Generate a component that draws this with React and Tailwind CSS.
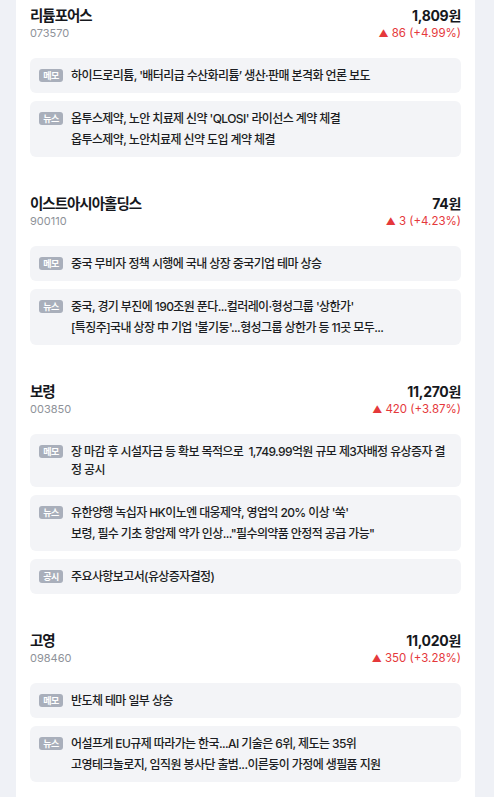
import React from "react";

const stocks = [
  {
    name: "리튬포어스",
    code: "073570",
    price: "1,809원",
    change: "86 (+4.99%)",
    items: [
      { tag: "메모", lines: ["하이드로리튬, '배터리급 수산화리튬’ 생산·판매 본격화 언론 보도"] },
      {
        tag: "뉴스",
        lines: ["옵투스제약, 노안 치료제 신약 'QLOSI' 라이선스 계약 체결", "옵투스제약, 노안치료제 신약 도입 계약 체결"],
      },
    ],
  },
  {
    name: "이스트아시아홀딩스",
    code: "900110",
    price: "74원",
    change: "3 (+4.23%)",
    items: [
      { tag: "메모", lines: ["중국 무비자 정책 시행에 국내 상장 중국기업 테마 상승"] },
      {
        tag: "뉴스",
        lines: [
          "중국, 경기 부진에 190조원 푼다...컬러레이·형성그룹 '상한가'",
          "[특징주]국내 상장 中 기업 '불기둥'...형성그룹 상한가 등 11곳 모두...",
        ],
      },
    ],
  },
  {
    name: "보령",
    code: "003850",
    price: "11,270원",
    change: "420 (+3.87%)",
    items: [
      { tag: "메모", lines: ["장 마감 후 시설자금 등 확보 목적으로  1,749.99억원 규모 제3자배정 유상증자 결정 공시"] },
      {
        tag: "뉴스",
        lines: [
          "유한양행 녹십자 HK이노엔 대웅제약, 영업익 20% 이상 '쑥'",
          "보령, 필수 기초 항암제 약가 인상...\"필수의약품 안정적 공급 가능\"",
        ],
      },
      { tag: "공시", lines: ["주요사항보고서(유상증자결정)"] },
    ],
  },
  {
    name: "고영",
    code: "098460",
    price: "11,020원",
    change: "350 (+3.28%)",
    items: [
      { tag: "메모", lines: ["반도체 테마 일부 상승"] },
      {
        tag: "뉴스",
        lines: [
          "어설프게 EU규제 따라가는 한국...AI 기술은 6위, 제도는 35위",
          "고영테크놀로지, 임직원 봉사단 출범...이른둥이 가정에 생필품 지원",
        ],
      },
    ],
  },
];

function NoteRow({ tag, lines }) {
  return (
    <div className="flex items-start gap-2 rounded-[6px] bg-[#f3f4f7] py-[8.5px] pl-[9px] pr-3">
      <div className="flex h-[18px] shrink-0 items-center">
        <span className="flex h-[13px] w-[24px] items-center justify-center rounded-[3px] bg-[#a9afbb] text-[9px] font-bold leading-none tracking-[-0.5px] text-white">
          {tag}
        </span>
      </div>
      <div className="flex min-w-0 flex-col gap-[3px]">
        {lines.map((line, i) => (
          <p key={i} className="whitespace-pre-wrap text-[12px] font-medium leading-[18px] tracking-[-0.6px] text-[#1b1d22]">
            {line}
          </p>
        ))}
      </div>
    </div>
  );
}

function StockCard({ stock }) {
  return (
    <section>
      <div className="flex items-start justify-between">
        <div>
          <h2 className="text-[14.5px] font-bold leading-[18px] tracking-[-1px] text-[#16181d]">{stock.name}</h2>
          <p className="text-[11px] leading-4 text-[#8e9299]">{stock.code}</p>
        </div>
        <div className="text-right">
          <p className="text-[14px] font-bold leading-[18px] tracking-[-0.3px] text-[#16181d]">{stock.price}</p>
          <p className="text-[11.5px] leading-4 text-[#e5383b]">
            <span className="mr-[3px] text-[10px]">▲</span>
            {stock.change}
          </p>
        </div>
      </div>
      <div className="mt-[17px] flex flex-col gap-2">
        {stock.items.map((item, i) => (
          <NoteRow key={i} tag={item.tag} lines={item.lines} />
        ))}
      </div>
    </section>
  );
}

export default function App() {
  return (
    <div className="min-h-screen bg-[#eff1f6] font-['Inter','Noto_Sans_CJK_KR',sans-serif]">
      <div className="ml-4 min-h-screen w-[459px] bg-white px-[14px] pt-[7px] pb-10">
        <div className="flex flex-col gap-[38px]">
          {stocks.map((s) => (
            <StockCard key={s.code} stock={s} />
          ))}
        </div>
      </div>
    </div>
  );
}
